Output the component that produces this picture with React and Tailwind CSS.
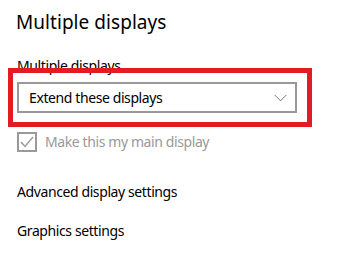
export default function App() {
  return (
    <div
      className="relative w-[349px] h-[274px] overflow-hidden bg-white pl-[17px] pt-[8px] text-black"
      style={{ fontFamily: '"Noto Sans", "Open Sans", sans-serif' }}
    >
      {/* Section title */}
      <h2 className="-ml-px h-[28px] text-[19px] leading-[29px] font-normal tracking-[0.05px]">Multiple displays</h2>

      <div className="mt-[20px] text-[14px] leading-[20px] tracking-[-0.4px]">Multiple displays</div>

      {/* Dropdown */}
      <div className="mt-[6px] flex h-[31px] w-[280px] items-center justify-between border-2 border-[#999] pl-[10px] pr-[8px] text-[14px] tracking-[-0.4px]">
        <span>Extend these displays</span>
        <svg width="13" height="8" viewBox="0 0 13 8" fill="none">
          <path d="M0.5 0.8 L6.5 6.8 L12.5 0.8" stroke="#777" strokeWidth="1" />
        </svg>
      </div>

      {/* Checkbox */}
      <div className="mt-[19px] flex items-center gap-[8px]">
        <div className="flex h-[20px] w-[20px] items-center justify-center border-2 border-[#999]">
          <svg width="14" height="12" viewBox="0 0 14 12" fill="none">
            <path d="M1 6 L5 10.5 L13 1" stroke="#999" strokeWidth="1.4" />
          </svg>
        </div>
        <span className="text-[14px] leading-[20px] tracking-[-0.4px] text-[#999]">Make this my main display</span>
      </div>

      <div className="mt-[30px] text-[14px] leading-[20px] tracking-[-0.4px]">Advanced display settings</div>
      <div className="mt-[19px] text-[14px] leading-[20px] tracking-[-0.4px]">Graphics settings</div>

      {/* Highlight annotation */}
      <div className="absolute left-[8px] top-[68px] h-[59px] w-[304px] border-[5px] border-[#e31b23]" />
    </div>
  )
}
